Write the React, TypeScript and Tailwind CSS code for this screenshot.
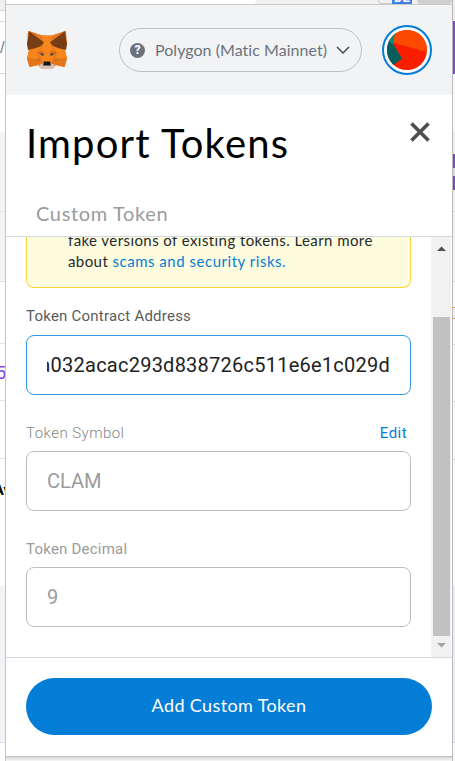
import type { ReactNode } from "react";

function Fox() {
  return (
    <svg width="42" height="40" viewBox="0 0 42 40" className="block">
      <path d="M2 1 16 5.5H26L40 1 41 14 39 20 41 28.5 38.5 37 30 35 26 39H16L12 35 3.5 37 1 28.5 3 20 1 14Z" fill="#e8771f" />
      <path d="M16 5.5H26L25 16 29 24 25 32H17L13 24 17 16Z" fill="#f7861c" />
      <path d="M3 20 1 28.5H13L11 23 17 15 10 17ZM39 20 41 28.5H29L31 23 25 15 32 17Z" fill="#f6851b" />
      <path d="M3 1 16 10 18 12.5 15 16 10 18 2 20 1 14 2 9ZM39 1 26 10 24 12.5 27 16 32 18 40 20 41 14 40 9Z" fill="#763d16" />
      <path d="M3 1 16 5.5 17.5 12ZM39 1 26 5.5 24.5 12Z" fill="#e8791d" />
      <path d="M1 28.5H13L12 35 3.5 37ZM41 28.5H29L30 35 38.5 37Z" fill="#e4751f" />
      <path d="M10.5 22.5 17 21 18.5 24 17 26ZM31.5 22.5 25 21 23.5 24 25 26Z" fill="#d5691c" />
      <path d="M10 29H14L13 33.5ZM32 29H28L29 33.5Z" fill="#d76a1b" />
      <path d="M13.5 23.6 17.5 23.8 17.8 25.6 15.5 25.4ZM28.5 23.6 24.5 23.8 24.2 25.6 26.5 25.4Z" fill="#3f4850" />
      <path d="M13 35 18 33H24L29 35 26 39H16Z" fill="#d7c1b3" />
      <path d="M18 31.5H24L25 35.5H17Z" fill="#161616" />
    </svg>
  );
}

function Avatar() {
  return (
    <svg width="50" height="50" viewBox="0 0 50 50" className="ml-5 block">
      <defs>
        <clipPath id="face"><circle cx="25" cy="25" r="20" /></clipPath>
      </defs>
      <circle cx="25" cy="25" r="24" fill="#f8fafc" stroke="#037dd6" strokeWidth="2" />
      <g clipPath="url(#face)">
        <rect width="50" height="50" fill="#fa1e00" />
        <path d="M10 0H50V28.5L11 17.5Z" fill="#fc4b01" />
        <path d="M0 10 10 17 20 33.5 12 39.5 0 45Z" fill="#045e5b" />
        <path d="M4 14 13 8 11 20 8 17.500Z" fill="#078c7c" />
      </g>
    </svg>
  );
}

function Row({ label, tone, children, edit }: { label: string; tone: string; children: ReactNode; edit?: boolean }) {
  return (
    <div className="h-[116px]">
      <div className={`flex h-[38px] items-center justify-between pr-[4px] font-[Roboto] text-[15px] ${tone}`}>
        <span>{label}</span>
        {edit && <span className="font-normal tracking-[0.45px] text-[#037dd6]">Edit</span>}
      </div>
      {children}
    </div>
  );
}

function LeftStrip() {
  return (
    <div className="flex h-[761px] w-[6px] shrink-0 flex-col overflow-hidden border-r border-[#c4c5c7] bg-white">
      <div className="h-[11px] shrink-0 border-b border-[#d5d5d8] bg-[#f0f0f1]" />
      <div className="h-[11px] shrink-0 border-b border-[#d9dae1]" />
      <div className="flex h-[52px] shrink-0 items-center border-b border-[#d9dae1] font-['Liberation_Sans'] text-[17px] text-[#73849b]">/</div>
      <div className="h-[58px] shrink-0" />
      <div className="h-[80px] shrink-0 border-b border-[#e4e5eb] bg-[#f3f4f6]" />
      <div className="h-[70px] shrink-0 border-b border-[#dedfe5] bg-[#f3f4f6]" />
      <div className="h-[62px] shrink-0 border-b border-[#e2e3e8]" />
      <div className="flex h-[57px] shrink-0 items-center justify-end border-b border-[#e2e3e8] font-[Roboto] text-[18px] text-[#8247e5]"><span className="-mr-px">5</span></div>
      <div className="h-[58px] shrink-0 border-b border-[#e2e3e8]" />
      <div className="flex h-[63px] shrink-0 items-center justify-center font-[Roboto] text-[15px] font-bold text-black">Av</div>
      <div className="h-[64px] shrink-0" />
      <div className="h-[157px] shrink-0 border-b border-[#dcdeea] bg-[#f2f3f6]" />
    </div>
  );
}

function RightStrip() {
  return (
    <div className="flex h-[761px] w-[3px] shrink-0 flex-col overflow-hidden border-l border-[#b9babc] bg-[#fafafa]">
      <div className="h-[21px] shrink-0 bg-[#eeeeef]" />
      <div className="h-[53px] shrink-0 bg-[#7847cf]" />
      <div className="h-[58px] shrink-0" />
      <div className="h-[22px] shrink-0 bg-[#eeeeef]" />
      <div className="h-[14px] shrink-0 bg-[#7847cf]" />
      <div className="h-[8px] shrink-0 bg-[#d6d6dd]" />
      <div className="h-[14px] shrink-0 bg-[#7847cf]" />
      <div className="h-[22px] shrink-0 border-b border-[#dcdde2] bg-[#f3f3f4]" />
      <div className="h-[70px] shrink-0 border-b border-[#dcdde2] bg-[#f3f3f4]" />
      <div className="h-[25px] shrink-0" />
      <div className="h-[12px] shrink-0 border-y border-[#d39a3a] bg-[#eeeeef]" />
      <div className="h-[26px] shrink-0 border-b border-[#dcdde2]" />
      <div className="h-[57px] shrink-0 border-b border-[#dcdde2]" />
      <div className="h-[58px] shrink-0 border-b border-[#dcdde2]" />
      <div className="h-[126px] shrink-0" />
      <div className="h-[157px] shrink-0 border-b border-[#d9dae5] bg-[#ebecf0]" />
    </div>
  );
}

export default function App() {
  return (
    <div className="flex h-[761px] w-[455px] overflow-hidden bg-[#f7f7f8] font-[Lato,sans-serif]">
      <LeftStrip />
      <div className="flex w-[446px] shrink-0 flex-col">
        <div className="flex h-[5px] shrink-0 overflow-hidden border-b border-[#c9c9ca] bg-[#f0f0f1]">
          <div className="h-[4px] w-[250px] rounded-br-[4px] bg-white" />
          <div className="ml-[122px] h-[4px] w-[14px] rounded-bl-[4px] border-b border-l border-[#ccc]" />
          <div className="flex h-[4px] w-[20px] shrink-0 items-end justify-center overflow-hidden bg-[#3f7ee8] font-[Roboto] text-[13px] leading-[13px] font-bold text-white">DE</div>
          <div className="ml-[5px] h-[4px] w-[35px] rounded-b-[4px] bg-[#d0d0d0]" />
        </div>

        <header className="flex h-[90px] shrink-0 items-center bg-[#f2f3f4] pl-5">
          <div className="w-[93px]"><Fox /></div>
          <div className="flex h-[44px] w-[243px] items-center rounded-full border border-[#bbc0c5] pl-[10px] text-[#6a737d]">
            <div className="flex size-[15px] items-center justify-center rounded-full bg-[#6a737d] font-[Roboto] text-[12px] font-black text-[#f2f3f4]">?</div>
            <span className="ml-[10px] w-[173px] text-[16px] tracking-[0.04px] whitespace-nowrap">Polygon (Matic Mainnet)</span>
            <svg width="14" height="9" viewBox="0 0 14 9" className="ml-[8px]"><path d="m1 1 6 6 6-6" fill="none" stroke="#454a50" strokeWidth="1.5" /></svg>
          </div>
          <Avatar />
        </header>

        <div className="flex h-[142px] shrink-0 flex-col border-b border-[#d2d8dd] bg-white">
          <div className="flex h-[97px] justify-between pr-[22px] pl-5">
            <h1 className="mt-[22px] text-[40px] leading-[52px] tracking-[1.15px] text-black">Import Tokens</h1>
            <svg width="20" height="20" viewBox="0 0 20 20" className="mt-[27px]"><path d="m1.5 1.500 17 17m0-17-17 17" stroke="#4d4d4d" strokeWidth="3.6" /></svg>
          </div>
          <div className="pl-[30px] text-[20px] leading-[42px] tracking-[0.65px] text-[#9b9b9b]">Custom Token</div>
        </div>

        <div className="flex h-[420px] shrink-0 overflow-hidden bg-white">
          <div className="w-[425px] pr-5 pl-5">
            <div className="flex h-[51px] flex-col justify-end overflow-hidden rounded-b-[8px] border-x border-b border-[#ffd33d] bg-[#fefcde] pb-[15px] pl-[41px] text-[15px] leading-[21px] tracking-[0.42px] whitespace-nowrap text-[#24292e]">
              <p>fake versions of existing tokens. Learn more</p>
              <p>about <span className="tracking-[0.52px] text-[#037dd6]">scams and security risks.</span></p>
            </div>
            <div className="pt-[9px]">
              <Row label="Token Contract Address" tone="tracking-[0.22px] text-[#5b5b5b]">
                <div className="h-[60px] rounded-[8px] border border-[#2f9ae0] px-5">
                  <div className="flex h-full justify-end overflow-hidden font-[Roboto] text-[20px] leading-[58px] tracking-[0.24px] whitespace-nowrap text-[#222]">a032acac293d838726c511e6e1c029d</div>
                </div>
              </Row>
              <Row label="Token Symbol" tone="pt-[2px] font-light tracking-[0.45px] text-[#858585]" edit>
                <div className="h-[60px] rounded-[8px] border border-[#bbc0c5] px-[20px] font-[Roboto] text-[20px] leading-[58px] text-[#9b9b9b]">CLAM</div>
              </Row>
              <Row label="Token Decimal" tone="pt-[2px] tracking-[0.22px] text-[#9b9b9b]">
                <div className="h-[60px] rounded-[8px] border border-[#bbc0c5] px-[20px] font-[Roboto] text-[20px] leading-[58px] text-[#9b9b9b]">9</div>
              </Row>
            </div>
          </div>
          <div className="flex w-[20px] flex-col items-center bg-[#f1f1f1]">
            <svg width="20" height="80" viewBox="0 0 20 80"><path d="M6 14 10.5 9.500 15 14Z" fill="#505050" /></svg>
            <div className="ml-[1px] h-[319px] w-[17px] bg-[#c1c1c1]" />
            <svg width="20" height="21" viewBox="0 0 20 21"><path d="M6 7 10.5 11.500 15 7Z" fill="#a3a3a3" /></svg>
          </div>
        </div>

        <footer className="flex h-[99px] shrink-0 border-t border-[#d2d8dd] bg-white px-5 pt-5">
          <button className="h-[57px] w-[406px] rounded-full bg-[#037dd6] pb-[2px] text-[18px] tracking-[0.38px] text-white">Add Custom Token</button>
        </footer>
        <div className="h-[5px] shrink-0 border-t border-[#bfc0c2] bg-linear-to-b from-[#d8d8d9] to-[#f7f7f8]" />
      </div>
      <RightStrip />
    </div>
  );
}
